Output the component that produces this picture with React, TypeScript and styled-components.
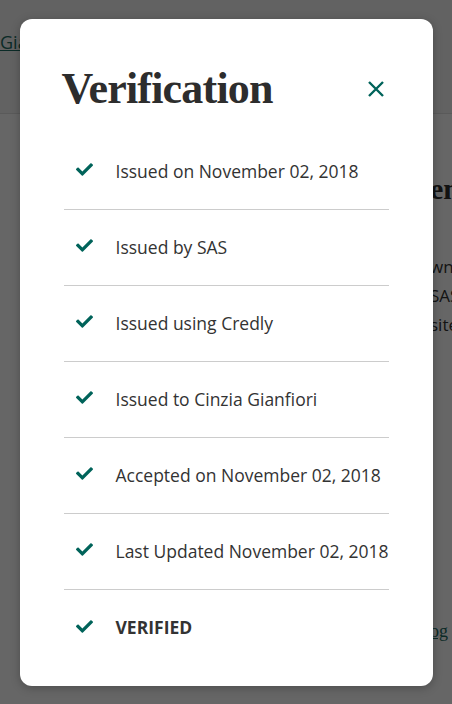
import React from "react";
import styled, { createGlobalStyle } from "styled-components";
import { FaCheck } from "react-icons/fa";

const GlobalStyle = createGlobalStyle`
  html, body { margin: 0; padding: 0; }
  body {
    font-family: "Open Sans", "Liberation Sans", sans-serif;
    color: #333;
    background: #fff;
    overflow: hidden;
  }
  * { box-sizing: border-box; }
`;

const Page = styled.div`
  width: 452px;
  height: 704px;
  position: relative;
  overflow: hidden;
  background: #fff;
`;

const Header = styled.header`
  height: 114px;
  background: #f6f6f6;
  border-bottom: 1px solid #e2e2e2;
  padding-top: 30px;
`;

const HeaderLink = styled.a`
  font-size: 18px;
  color: #1d6b63;
  text-decoration: underline;
`;

const Main = styled.main`
  padding: 58px 0 0 430px;
  white-space: nowrap;
`;

const SideHeading = styled.h2`
  margin: 0 0 46px;
  font-family: "Liberation Serif", serif;
  font-weight: 700;
  font-size: 30px;
  color: #2d2d2d;
`;

const SideText = styled.p`
  margin: 0;
  font-size: 17px;
  line-height: 29px;
`;

const SideLink = styled.a`
  display: block;
  margin-top: 282px;
  font-family: "Liberation Serif", serif;
  font-size: 18px;
  color: #1d6b63;
  text-decoration: underline;
`;

const Overlay = styled.div`
  position: absolute;
  inset: 0;
  background: rgba(0, 0, 0, 0.6);
  display: flex;
  justify-content: center;
  align-items: flex-start;
  padding-top: 19px;
`;

const Modal = styled.div`
  width: 413px;
  background: #fff;
  border-radius: 12px;
  padding: 0 44px 20px;
  box-shadow: 0 2px 10px rgba(0, 0, 0, 0.25);
`;

const ModalHeader = styled.div`
  height: 115px;
  padding-top: 24px;
  display: flex;
  align-items: center;
  justify-content: space-between;
`;

const Title = styled.h1`
  margin: 0 0 0 -2px;
  font-family: "Liberation Serif", serif;
  font-weight: 700;
  font-size: 44px;
  line-height: 1;
  letter-spacing: -0.8px;
  color: #2d2d2d;
`;

const CloseButton = styled.button`
  border: 0;
  background: transparent;
  padding: 5px;
  display: flex;
  cursor: pointer;
  color: #00635a;
`;

const List = styled.ul`
  list-style: none;
  margin: 0;
  padding: 0;
`;

const Row = styled.li`
  height: 76px;
  display: flex;
  align-items: center;
  gap: 23px;
  padding: 0 0 2px 12px;
  border-bottom: 1px solid #cccccc;
  &:last-child { border-bottom: 0; }
`;

const Check = styled.span`
  display: flex;
  color: #00635a;
  margin-top: -2px;
`;

const RowText = styled.span<{ $strong?: boolean }>`
  font-size: 17.5px;
  color: #333;
  font-weight: ${(p) => (p.$strong ? 700 : 400)};
`;

const items = [
  "Issued on November 02, 2018",
  "Issued by SAS",
  "Issued using Credly",
  "Issued to Cinzia Gianfiori",
  "Accepted on November 02, 2018",
  "Last Updated November 02, 2018",
];

export default function App() {
  return (
    <>
      <GlobalStyle />
      <Page>
        <Header>
          <HeaderLink>Gianfiori</HeaderLink>
        </Header>
        <Main>
          <SideHeading>en</SideHeading>
          <SideText>wn</SideText>
          <SideText>SAS</SideText>
          <SideText>site</SideText>
          <SideLink>og</SideLink>
        </Main>
        <Overlay>
          <Modal role="dialog" aria-label="Verification">
            <ModalHeader>
              <Title>Verification</Title>
              <CloseButton aria-label="Close">
                <svg width="16" height="16" viewBox="0 0 16 16" fill="none">
                  <path d="M1 1 L15 15 M15 1 L1 15" stroke="currentColor" strokeWidth="2.4" />
                </svg>
              </CloseButton>
            </ModalHeader>
            <List>
              {items.map((t) => (
                <Row key={t}>
                  <Check>
                    <FaCheck size={17} />
                  </Check>
                  <RowText>{t}</RowText>
                </Row>
              ))}
              <Row>
                <Check>
                  <FaCheck size={17} />
                </Check>
                <RowText $strong>VERIFIED</RowText>
              </Row>
            </List>
          </Modal>
        </Overlay>
      </Page>
    </>
  );
}
